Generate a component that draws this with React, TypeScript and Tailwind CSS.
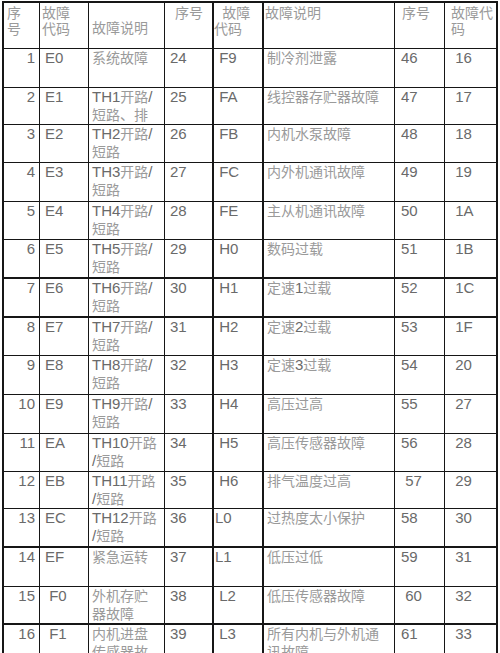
import React from "react";

// column widths: line positions at x = 2, 39, 88, 164, 212, 262, 394, 444, 498
const cols = [
  "w-[37px] border-l-2 text-right pr-[4px]",
  "w-[49px] border-l pl-[5px]",
  "w-[76px] border-l pl-[3px] pr-[4px]",
  "w-[48px] border-l pl-[5px]",
  "w-[50px] border-l-2 pl-[1px]",
  "w-[132px] border-l-2 pl-[3px]",
  "w-[50px] border-l pl-[6px]",
  "w-[54px] border-l border-r-2 pl-[6px]",
];

const headCols = [
  "w-[37px] border-l-2 pl-[3px] pt-[2px]",
  "w-[49px] border-l pl-[2px] pt-[2px]",
  "w-[76px] border-l pl-[3px] pt-[17px]",
  "w-[48px] border-l pl-[10px] pt-[2px]",
  "w-[50px] border-l-2 pl-0 pt-[2px]",
  "w-[132px] border-l-2 pl-[1px] pt-[2px]",
  "w-[50px] border-l pl-[7px] pt-[2px]",
  "w-[54px] border-l border-r-2 pl-[6px] pt-[2px]",
];

const header = ["序\n号", "故障\n代码", "故障说明", "序号", "  故障\n代码", "故障说明", "序号", "故障代\n码"];

const rows: { cls: string; cells: string[] }[] = [
  { cls: "h-[39px] border-b", cells: ["1", "E0", "系统故障", "24", " F9", "制冷剂泄露", "46", " 16"] },
  { cls: "h-[37px] border-b", cells: ["2", "E1", "TH1开路/\n短路、排", "25", " FA", "线控器存贮器故障", "47", " 17"] },
  { cls: "h-[38px] border-b", cells: ["3", "E2", "TH2开路/\n短路", "26", " FB", "内机水泵故障", "48", " 18"] },
  { cls: "h-[39px] border-b", cells: ["4", "E3", "TH3开路/\n短路", "27", " FC", "内外机通讯故障", "49", " 19"] },
  { cls: "h-[38px] border-b", cells: ["5", "E4", "TH4开路/\n短路", "28", " FE", "主从机通讯故障", "50", " 1A"] },
  { cls: "h-[39px] border-b-2", cells: ["6", "E5", "TH5开路/\n短路", "29", " H0", "数码过载", "51", " 1B"] },
  { cls: "h-[39px] border-b-2", cells: ["7", "E6", "TH6开路/\n短路", "30", " H1", "定速1过载", "52", " 1C"] },
  { cls: "h-[38px] border-b", cells: ["8", "E7", "TH7开路/\n短路", "31", " H2", "定速2过载", "53", " 1F"] },
  { cls: "h-[39px] border-b", cells: ["9", "E8", "TH8开路/\n短路", "32", " H3", "定速3过载", "54", " 20"] },
  { cls: "h-[39px] border-b", cells: ["10", "E9", "TH9开路/\n短路", "33", " H4", "高压过高", "55", " 27"] },
  { cls: "h-[38px] border-b", cells: ["11", "EA", "TH10开路\n/短路", "34", " H5", "高压传感器故障", "56", " 28"] },
  { cls: "h-[37px] border-b", cells: ["12", "EB", "TH11开路\n/短路", "35", " H6", "排气温度过高", " 57", " 29"] },
  { cls: "h-[39px] border-b-2", cells: ["13", "EC", "TH12开路\n/短路", "36", "L0", "过热度太小保护", "58", " 30"] },
  { cls: "h-[39px] border-b", cells: ["14", "EF", "紧急运转", "37", "L1", "低压过低", "59", " 31"] },
  { cls: "h-[38px] border-b-2", cells: ["15", " F0", "外机存贮\n器故障", "38", " L2", "低压传感器故障", " 60", " 32"] },
  { cls: "h-[39px] border-b", cells: ["16", " F1", "内机进盘\n传感器故", "39", " L3", "所有内机与外机通\n讯故障", "61", " 33"] },
];

const cjk = /[\u3000-\u303f\u4e00-\u9fff\uff00-\uffef]/;

function Runs({ text }: { text: string }) {
  const parts: { s: string; c: boolean }[] = [];
  for (const ch of text) {
    const c = cjk.test(ch);
    const last = parts[parts.length - 1];
    if (last && last.c === c) last.s += ch;
    else parts.push({ s: ch, c });
  }
  return (
    <>
      {parts.map((p, i) =>
        p.c ? (
          <span key={i} className="text-[14px] text-[#9a9a9a]">
            {p.s}
          </span>
        ) : (
          <span key={i} className="text-[15px] text-[#6a6a6a]">
            {p.s}
          </span>
        )
      )}
    </>
  );
}

function Cell({ text, cls }: { text: string; cls: string }) {
  return (
    <div className={`shrink-0 h-full overflow-hidden border-[#161616] whitespace-pre ${cls}`}>
      {text.split("\n").map((line, i) => (
        <div key={i}>
          <Runs text={line} />
        </div>
      ))}
    </div>
  );
}

export default function App() {
  return (
    <div className="h-[653px] overflow-hidden bg-white pl-[2px] pt-[1px] font-['Liberation_Sans','Noto_Sans_CJK_SC',sans-serif]">
      <div className="w-[496px] border-t-2 border-[#161616]">
        <div className="flex h-[46px] border-b border-[#161616] leading-[16px]">
          {header.map((h, i) => (
            <Cell key={i} text={h} cls={headCols[i]} />
          ))}
        </div>
        {rows.map((r, ri) => (
          <div key={ri} className={`flex border-[#161616] leading-[18px] ${r.cls}`}>
            {r.cells.map((t, i) => (
              <Cell key={i} text={t} cls={cols[i]} />
            ))}
          </div>
        ))}
      </div>
    </div>
  );
}
